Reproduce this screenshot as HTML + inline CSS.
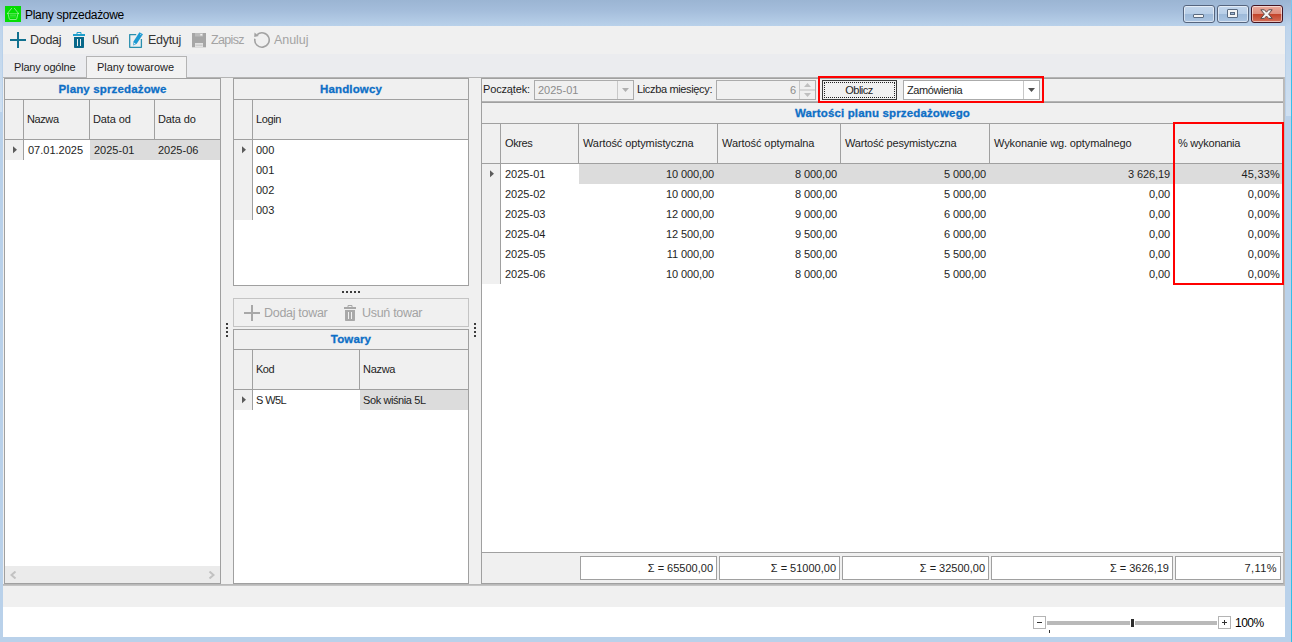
<!DOCTYPE html>
<html><head><meta charset="utf-8"><title>Plany sprzedażowe</title>
<style>
*{box-sizing:border-box;margin:0;padding:0}
html,body{width:1292px;height:642px;overflow:hidden;background:#b9d1ea}
body{position:relative;font-family:"Liberation Sans","DejaVu Sans",sans-serif;font-size:11px;color:#1e1e1e}
.a{position:absolute}
.t{position:absolute;white-space:nowrap}
.tb{font-size:12.5px;letter-spacing:-.3px;color:#343434}
.dis{color:#a3a3a3}
.band{color:#0e6fc6;font-weight:bold;text-align:center;font-size:11.5px;letter-spacing:.15px;-webkit-text-stroke:.3px #0e6fc6}
.r{text-align:right}
.wb{border:1px solid #56657e;border-radius:3px;background:linear-gradient(#c3d6ec 0,#b9cfe8 48%,#9db9d9 52%,#abc5e2 100%);box-shadow:inset 0 0 0 1px rgba(255,255,255,.55)}
.wc{border-color:#431422;background:linear-gradient(#e9a99b 0,#de8f7f 48%,#c2432a 52%,#d4705a 100%)}
</style></head><body>
<div class="a" style="left:0px;top:0px;width:1292px;height:26px;background:linear-gradient(#9bb5d3 0,#a4bddb 40%,#b9d1ea 100%)"></div>
<div class="a" style="left:1291px;top:0px;width:1px;height:642px;background:linear-gradient(#7cc6f0 0,#35c0ec 12%,#30c0e8 100%)"></div>
<div class="a" style="left:1286px;top:0px;width:5px;height:116px;background:linear-gradient(rgba(255,255,255,0),rgba(255,255,255,.32))"></div>
<div class="a" style="left:0px;top:0px;width:2px;height:112px;background:linear-gradient(rgba(255,255,255,0),rgba(255,255,255,.32))"></div>
<div class="a" style="left:3px;top:26px;width:1282px;height:611px;background:#fff"></div>
<div class="a" style="left:3px;top:26px;width:1282px;height:28px;background:#f0f0f0"></div>
<div class="a" style="left:3px;top:54px;width:1282px;height:23px;background:#ebecef"></div>
<div class="a" style="left:3px;top:77px;width:1282px;height:509px;background:#f0f0f0"></div>
<div class="a" style="left:3px;top:77px;width:1282px;height:1px;background:#b4b4b4"></div>
<div class="a" style="left:3px;top:584px;width:1282px;height:1px;background:#b9b9b9"></div>
<div class="a" style="left:3px;top:585px;width:1282px;height:1px;background:#c4c4c4"></div>
<div class="a" style="left:1284px;top:77px;width:1px;height:509px;background:#bcbcbc"></div>
<div class="a" style="left:3px;top:586px;width:1282px;height:21px;background:#f0f0f0"></div>
<div class="a" style="left:5px;top:6px;width:16px;height:16px;background:#04dc04"></div>
<svg class="a" style="left:5px;top:6px" width="16" height="16" viewBox="0 0 16 16"><g fill="none" stroke="#fff" stroke-width="1" stroke-linecap="round"><path d="M6.600 2.300L2.600 7.300M9.400 2.300L13.400 7.300" opacity=".5"/><path d="M2.400 7.500H13.600" opacity=".3"/><path d="M3 7.600L4.300 13Q4.500 13.500 5 13.500H11Q11.500 13.500 11.700 13L13 7.600" opacity=".5"/><path d="M6 9.500v2M8 9.500v2M10 9.500v2M5.200 9H10.800" stroke-width=".8" opacity=".3"/></g></svg>
<div class="t" style="left:25px;top:6px;height:18px;line-height:18px;font-size:12px;letter-spacing:-.3px;color:#000;">Plany sprzedażowe</div>
<div class="a wb" style="left:1183px;top:5px;width:32px;height:18px;"><div class="a" style="left:9px;top:8px;width:11px;height:4px;background:#f4f4f4;border:1px solid #5a6a80;border-radius:1px"></div></div>
<div class="a wb" style="left:1217px;top:5px;width:32px;height:18px;"><div class="a" style="left:9px;top:3px;width:11px;height:9px;background:#f4f4f4;border:1px solid #5a6a80;border-radius:1px"></div><div class="a" style="left:12px;top:6px;width:5px;height:3px;background:#9fb7d6;border:1px solid #5a6a80"></div></div>
<div class="a wb wc" style="left:1251px;top:5px;width:32px;height:18px;"><svg class="a" style="left:8px;top:3px" width="13" height="11" viewBox="0 0 13 11"><path d="M0.800 0.800h3.600L6.500 3.200 8.600 0.800h3.600L8.600 5.100l3.600 4.300h-3.600L6.500 7 4.400 9.400H0.800L4.400 5.100z" fill="#f4f4f4" stroke="#5b4a4a" stroke-width="1"/></svg></div>
<svg class="a" style="left:10px;top:32px" width="16" height="16" viewBox="0 0 16 16"><path d="M7 0h2v7h7v2H9v7H7V9H0V7h7z" fill="#11718f"/></svg>
<div class="t tb" style="left:30px;top:30px;height:20px;line-height:20px;">Dodaj</div>
<svg class="a" style="left:73px;top:32px" width="12" height="16" viewBox="0 0 12 16"><path d="M4 2.500V0.500H8V2.500" fill="none" stroke="#1f9fcc" stroke-width="1"/><path d="M0 2h12v2H0z" fill="#1f9fcc"/><path d="M1 5h10v10.200q0 .8-.8.800H1.800q-.8 0-.8-.8z" fill="#08688a"/><path d="M4 7h1v7H4zM7 7h1v7H7z" fill="#f0f0f0"/></svg>
<div class="t tb" style="left:92px;top:30px;height:20px;line-height:20px;letter-spacing:-0.75px;">Usuń</div>
<svg class="a" style="left:128px;top:32px" width="16" height="16" viewBox="0 0 16 16"><path d="M8.200 2.600H1.700V15.300H13.400V7" fill="none" stroke="#2a8fae" stroke-width="1.300" stroke-linejoin="round"/><path d="M11.400 0.200L15 2.300 8.700 11.800 5.300 13.400 5.500 9.600z" fill="#1e9ad2"/><path d="M6.200 10.800l1.500.9-1.800.9z" fill="#e8f4fa"/><path d="M12.300 2.300l.9.500" stroke="#e8f4fa" stroke-width=".8"/></svg>
<div class="t tb" style="left:148px;top:30px;height:20px;line-height:20px;">Edytuj</div>
<svg class="a" style="left:192px;top:32px" width="14" height="16" viewBox="0 0 14 16"><path d="M0 1h14v14.300H0z" fill="#a6a6a6"/><path d="M3 1h8v3.500H3z" fill="#bcbcbc"/><path d="M8.300 2h2v1.500h-2z" fill="#f2f2f2"/><path d="M3 11h8v4.300H3z" fill="#e2e2e2"/><path d="M3.500 13.200h7" stroke="#bdbdbd" stroke-width=".8"/></svg>
<div class="t tb dis" style="left:211px;top:30px;height:20px;line-height:20px;letter-spacing:-0.65px;">Zapisz</div>
<svg class="a" style="left:253px;top:31px" width="18" height="18" viewBox="0 0 18 18"><path d="M4.180 3.650A7.200 7.200 0 1 1 1.910 7.750" fill="none" stroke="#a2a2a2" stroke-width="1.600"/><path d="M1.500 1.600L5.800 5.100 1.200 5.900z" fill="#a2a2a2"/></svg>
<div class="t tb dis" style="left:274px;top:30px;height:20px;line-height:20px;letter-spacing:-0.05px;">Anuluj</div>
<div class="t" style="left:14px;top:57px;height:20px;line-height:20px;letter-spacing:-0.18px;">Plany ogólne</div>
<div class="a" style="left:86px;top:56px;width:101px;height:22px;background:#f2f2f2;border:1px solid #b4b4b4;border-bottom:none"></div>
<div class="t" style="left:97px;top:57px;height:20px;line-height:20px;letter-spacing:-0.05px;">Plany towarowe</div>
<div class="a" style="left:4px;top:78px;width:217px;height:506px;background:#fff;border:1px solid #a0a0a0"></div>
<div class="a" style="left:5px;top:79px;width:215px;height:60px;background:#f0f0f0"></div>
<div class="t band" style="left:5px;top:79px;width:215px;height:20px;line-height:20px;">Plany sprzedażowe</div>
<div class="a" style="left:5px;top:99px;width:215px;height:1px;background:#a0a0a0"></div>
<div class="a" style="left:5px;top:139px;width:215px;height:1px;background:#a0a0a0"></div>
<div class="a" style="left:23px;top:100px;width:1px;height:60px;background:#a0a0a0"></div>
<div class="a" style="left:89px;top:100px;width:1px;height:39px;background:#a0a0a0"></div>
<div class="a" style="left:154px;top:100px;width:1px;height:39px;background:#a0a0a0"></div>
<div class="a" style="left:5px;top:140px;width:18px;height:20px;background:#f0f0f0"></div>
<svg class="a" style="left:13px;top:146px" width="5" height="8" viewBox="0 0 5 8"><path d="M0 0.300L4 3.800 0 7.300z" fill="#5c5c5c"/></svg>
<div class="t" style="left:27px;top:109px;height:20px;line-height:20px;letter-spacing:-0.4px;">Nazwa</div>
<div class="t" style="left:93px;top:109px;height:20px;line-height:20px;letter-spacing:-0.1px;">Data od</div>
<div class="t" style="left:158px;top:109px;height:20px;line-height:20px;letter-spacing:-0.1px;">Data do</div>
<div class="a" style="left:90px;top:140px;width:130px;height:20px;background:#dcdcdc"></div>
<div class="t" style="left:28px;top:140px;height:20px;line-height:20px;letter-spacing:0px;">07.01.2025</div>
<div class="t" style="left:94px;top:140px;height:20px;line-height:20px;">2025-01</div>
<div class="t" style="left:158px;top:140px;height:20px;line-height:20px;">2025-06</div>
<div class="a" style="left:5px;top:566px;width:215px;height:17px;background:#ebebeb"></div>
<svg class="a" style="left:10px;top:571px" width="7" height="8" viewBox="0 0 7 8"><path d="M5.500 0.500L1.500 4l4 3.500" fill="none" stroke="#c2c2c2" stroke-width="2"/></svg>
<svg class="a" style="left:208px;top:571px" width="7" height="8" viewBox="0 0 7 8"><path d="M1.500 0.500L5.500 4l-4 3.500" fill="none" stroke="#c2c2c2" stroke-width="2"/></svg>
<div class="a" style="left:233px;top:78px;width:236px;height:208px;background:#fff;border:1px solid #a0a0a0"></div>
<div class="a" style="left:234px;top:79px;width:234px;height:60px;background:#f0f0f0"></div>
<div class="t band" style="left:234px;top:79px;width:234px;height:20px;line-height:20px;">Handlowcy</div>
<div class="a" style="left:234px;top:99px;width:234px;height:1px;background:#a0a0a0"></div>
<div class="a" style="left:234px;top:139px;width:234px;height:1px;background:#a0a0a0"></div>
<div class="a" style="left:252px;top:100px;width:1px;height:120px;background:#a0a0a0"></div>
<div class="a" style="left:234px;top:140px;width:18px;height:80px;background:#f0f0f0"></div>
<svg class="a" style="left:242px;top:146px" width="5" height="8" viewBox="0 0 5 8"><path d="M0 0.300L4 3.800 0 7.300z" fill="#5c5c5c"/></svg>
<div class="t" style="left:256px;top:109px;height:20px;line-height:20px;letter-spacing:-0.4px;">Login</div>
<div class="t" style="left:256px;top:140px;height:20px;line-height:20px;">000</div>
<div class="t" style="left:256px;top:160px;height:20px;line-height:20px;">001</div>
<div class="t" style="left:256px;top:180px;height:20px;line-height:20px;">002</div>
<div class="t" style="left:256px;top:200px;height:20px;line-height:20px;">003</div>
<div class="a" style="left:342px;top:291px;width:2px;height:2px;background:#3c3c3c"></div>
<div class="a" style="left:346px;top:291px;width:2px;height:2px;background:#3c3c3c"></div>
<div class="a" style="left:350px;top:291px;width:2px;height:2px;background:#3c3c3c"></div>
<div class="a" style="left:354px;top:291px;width:2px;height:2px;background:#3c3c3c"></div>
<div class="a" style="left:358px;top:291px;width:2px;height:2px;background:#3c3c3c"></div>
<div class="a" style="left:226px;top:323px;width:2px;height:2px;background:#3c3c3c"></div>
<div class="a" style="left:226px;top:327px;width:2px;height:2px;background:#3c3c3c"></div>
<div class="a" style="left:226px;top:331px;width:2px;height:2px;background:#3c3c3c"></div>
<div class="a" style="left:226px;top:335px;width:2px;height:2px;background:#3c3c3c"></div>
<div class="a" style="left:474px;top:323px;width:2px;height:2px;background:#3c3c3c"></div>
<div class="a" style="left:474px;top:327px;width:2px;height:2px;background:#3c3c3c"></div>
<div class="a" style="left:474px;top:331px;width:2px;height:2px;background:#3c3c3c"></div>
<div class="a" style="left:474px;top:335px;width:2px;height:2px;background:#3c3c3c"></div>
<div class="a" style="left:233px;top:298px;width:236px;height:29px;border:1px solid #c4c4c4;background:#f0f0f0"></div>
<svg class="a" style="left:244px;top:305px" width="16" height="16" viewBox="0 0 16 16"><path d="M7 0h2v7h7v2H9v7H7V9H0V7h7z" fill="#a8a8a8"/></svg>
<div class="t tb dis" style="left:264px;top:303px;height:20px;line-height:20px;">Dodaj towar</div>
<svg class="a" style="left:344px;top:305px" width="12" height="16" viewBox="0 0 12 16"><path d="M4 2.500V0.500H8V2.500" fill="none" stroke="#a8a8a8" stroke-width="1"/><path d="M0 2h12v2H0z" fill="#a8a8a8"/><path d="M1 5h10v10.200q0 .8-.8.800H1.800q-.8 0-.8-.8z" fill="#a8a8a8"/><path d="M4 7h1v7H4zM7 7h1v7H7z" fill="#f0f0f0"/></svg>
<div class="t tb dis" style="left:362px;top:303px;height:20px;line-height:20px;">Usuń towar</div>
<div class="a" style="left:233px;top:329px;width:236px;height:255px;background:#fff;border:1px solid #a0a0a0"></div>
<div class="a" style="left:234px;top:330px;width:234px;height:59px;background:#f0f0f0"></div>
<div class="t band" style="left:234px;top:329px;width:234px;height:20px;line-height:20px;">Towary</div>
<div class="a" style="left:234px;top:349px;width:234px;height:1px;background:#a0a0a0"></div>
<div class="a" style="left:234px;top:389px;width:234px;height:1px;background:#a0a0a0"></div>
<div class="a" style="left:252px;top:350px;width:1px;height:60px;background:#a0a0a0"></div>
<div class="a" style="left:359px;top:350px;width:1px;height:39px;background:#a0a0a0"></div>
<div class="a" style="left:234px;top:390px;width:18px;height:20px;background:#f0f0f0"></div>
<svg class="a" style="left:242px;top:396px" width="5" height="8" viewBox="0 0 5 8"><path d="M0 0.300L4 3.800 0 7.300z" fill="#5c5c5c"/></svg>
<div class="t" style="left:256px;top:359px;height:20px;line-height:20px;letter-spacing:-0.5px;">Kod</div>
<div class="t" style="left:363px;top:359px;height:20px;line-height:20px;letter-spacing:-0.3px;">Nazwa</div>
<div class="a" style="left:360px;top:390px;width:108px;height:20px;background:#dcdcdc"></div>
<div class="t" style="left:256px;top:390px;height:20px;line-height:20px;letter-spacing:-0.6px;">S W5L</div>
<div class="t" style="left:363px;top:390px;height:20px;line-height:20px;letter-spacing:-0.4px;">Sok wiśnia 5L</div>
<div class="a" style="left:481px;top:78px;width:803px;height:506px;background:#fff;border:1px solid #a0a0a0;border-right-color:#b8b8b8"></div>
<div class="a" style="left:482px;top:79px;width:801px;height:84px;background:#f0f0f0"></div>
<div class="a" style="left:482px;top:101px;width:801px;height:1px;background:#b4b4b4"></div>
<div class="a" style="left:482px;top:102px;width:801px;height:1px;background:#a0a0a0"></div>
<div class="t" style="left:483px;top:79px;height:20px;line-height:20px;letter-spacing:-0.15px;">Początek:</div>
<div class="a" style="left:534px;top:80px;width:100px;height:20px;border:1px solid #ababab;background:#f0f0f0"></div>
<div class="a" style="left:617px;top:81px;width:1px;height:18px;background:#c8c8c8"></div>
<div class="t" style="left:538px;top:80px;height:20px;line-height:20px;color:#8c8c8c;">2025-01</div>
<svg class="a" style="left:622px;top:88px" width="7" height="4" viewBox="0 0 7 4"><path d="M0 0h7L3.500 4z" fill="#b0b0b0"/></svg>
<div class="t" style="left:637px;top:79px;height:20px;line-height:20px;letter-spacing:-0.35px;">Liczba miesięcy:</div>
<div class="a" style="left:716px;top:80px;width:100px;height:20px;border:1px solid #ababab;background:#f0f0f0"></div>
<div class="a" style="left:799px;top:81px;width:1px;height:18px;background:#c8c8c8"></div>
<div class="a" style="left:800px;top:89px;width:15px;height:2px;background:#d6d6d6"></div>
<div class="t" style="left:716px;top:80px;width:80px;height:20px;line-height:20px;color:#8c8c8c;text-align:right;">6</div>
<svg class="a" style="left:804px;top:83px" width="7" height="4" viewBox="0 0 7 4"><path d="M0 4h7L3.500 0z" fill="#c0c0c0"/></svg>
<svg class="a" style="left:804px;top:93px" width="7" height="4" viewBox="0 0 7 4"><path d="M0 0h7L3.500 4z" fill="#c0c0c0"/></svg>
<div class="a" style="left:822px;top:80px;width:75px;height:20px;border:1px solid #3a3a3a;background:#f0f0f0"><div class="a" style="left:1px;top:1px;right:1px;bottom:1px;border:1px dotted #222"></div></div>
<div class="t" style="left:822px;top:80px;width:74px;height:20px;line-height:20px;text-align:center;letter-spacing:-0.5px;">Oblicz</div>
<div class="a" style="left:903px;top:80px;width:137px;height:20px;border:1px solid #ababab;background:#fff"></div>
<div class="a" style="left:1023px;top:81px;width:1px;height:18px;background:#c8c8c8"></div>
<div class="t" style="left:907px;top:80px;height:20px;line-height:20px;letter-spacing:-0.4px;">Zamówienia</div>
<svg class="a" style="left:1028px;top:88px" width="7" height="4" viewBox="0 0 7 4"><path d="M0 0h7L3.500 4z" fill="#505050"/></svg>
<div class="a" style="left:818px;top:76px;width:226px;height:27px;border:2px solid #f00"></div>
<div class="t band" style="left:482px;top:103px;width:801px;height:20px;line-height:20px;">Wartości planu sprzedażowego</div>
<div class="a" style="left:482px;top:123px;width:801px;height:1px;background:#a0a0a0"></div>
<div class="a" style="left:482px;top:163px;width:801px;height:1px;background:#a0a0a0"></div>
<div class="a" style="left:500px;top:124px;width:1px;height:160px;background:#a0a0a0"></div>
<div class="a" style="left:578px;top:124px;width:1px;height:39px;background:#a0a0a0"></div>
<div class="a" style="left:717px;top:124px;width:1px;height:39px;background:#a0a0a0"></div>
<div class="a" style="left:840px;top:124px;width:1px;height:39px;background:#a0a0a0"></div>
<div class="a" style="left:989px;top:124px;width:1px;height:39px;background:#a0a0a0"></div>
<div class="a" style="left:1173px;top:124px;width:1px;height:39px;background:#a0a0a0"></div>
<div class="a" style="left:482px;top:164px;width:18px;height:120px;background:#f0f0f0"></div>
<svg class="a" style="left:490px;top:170px" width="5" height="8" viewBox="0 0 5 8"><path d="M0 0.300L4 3.800 0 7.300z" fill="#5c5c5c"/></svg>
<div class="t" style="left:505px;top:133px;height:20px;line-height:20px;letter-spacing:-0.4px;">Okres</div>
<div class="t" style="left:583px;top:133px;height:20px;line-height:20px;letter-spacing:-0.1px;">Wartość optymistyczna</div>
<div class="t" style="left:722px;top:133px;height:20px;line-height:20px;letter-spacing:-0.08px;">Wartość optymalna</div>
<div class="t" style="left:845px;top:133px;height:20px;line-height:20px;letter-spacing:-0.18px;">Wartość pesymistyczna</div>
<div class="t" style="left:994px;top:133px;height:20px;line-height:20px;letter-spacing:-0.12px;">Wykonanie wg. optymalnego</div>
<div class="t" style="left:1178px;top:133px;height:20px;line-height:20px;letter-spacing:-0.25px;">% wykonania</div>
<div class="a" style="left:579px;top:164px;width:704px;height:20px;background:#dcdcdc"></div>
<div class="t" style="left:505px;top:164px;height:20px;line-height:20px;">2025-01</div>
<div class="t" style="left:594px;top:164px;width:120px;height:20px;line-height:20px;text-align:right;letter-spacing:-0.1px;">10 000,00</div>
<div class="t" style="left:717px;top:164px;width:120px;height:20px;line-height:20px;text-align:right;letter-spacing:-0.1px;">8 000,00</div>
<div class="t" style="left:866px;top:164px;width:120px;height:20px;line-height:20px;text-align:right;letter-spacing:-0.1px;">5 000,00</div>
<div class="t" style="left:1050px;top:164px;width:120px;height:20px;line-height:20px;text-align:right;letter-spacing:-0.1px;">3 626,19</div>
<div class="t" style="left:1160px;top:164px;width:120px;height:20px;line-height:20px;text-align:right;letter-spacing:0.2px;">45,33%</div>
<div class="t" style="left:505px;top:184px;height:20px;line-height:20px;">2025-02</div>
<div class="t" style="left:594px;top:184px;width:120px;height:20px;line-height:20px;text-align:right;letter-spacing:-0.1px;">10 000,00</div>
<div class="t" style="left:717px;top:184px;width:120px;height:20px;line-height:20px;text-align:right;letter-spacing:-0.1px;">8 000,00</div>
<div class="t" style="left:866px;top:184px;width:120px;height:20px;line-height:20px;text-align:right;letter-spacing:-0.1px;">5 000,00</div>
<div class="t" style="left:1050px;top:184px;width:120px;height:20px;line-height:20px;text-align:right;letter-spacing:-0.1px;">0,00</div>
<div class="t" style="left:1160px;top:184px;width:120px;height:20px;line-height:20px;text-align:right;letter-spacing:0.2px;">0,00%</div>
<div class="t" style="left:505px;top:204px;height:20px;line-height:20px;">2025-03</div>
<div class="t" style="left:594px;top:204px;width:120px;height:20px;line-height:20px;text-align:right;letter-spacing:-0.1px;">12 000,00</div>
<div class="t" style="left:717px;top:204px;width:120px;height:20px;line-height:20px;text-align:right;letter-spacing:-0.1px;">9 000,00</div>
<div class="t" style="left:866px;top:204px;width:120px;height:20px;line-height:20px;text-align:right;letter-spacing:-0.1px;">6 000,00</div>
<div class="t" style="left:1050px;top:204px;width:120px;height:20px;line-height:20px;text-align:right;letter-spacing:-0.1px;">0,00</div>
<div class="t" style="left:1160px;top:204px;width:120px;height:20px;line-height:20px;text-align:right;letter-spacing:0.2px;">0,00%</div>
<div class="t" style="left:505px;top:224px;height:20px;line-height:20px;">2025-04</div>
<div class="t" style="left:594px;top:224px;width:120px;height:20px;line-height:20px;text-align:right;letter-spacing:-0.1px;">12 500,00</div>
<div class="t" style="left:717px;top:224px;width:120px;height:20px;line-height:20px;text-align:right;letter-spacing:-0.1px;">9 500,00</div>
<div class="t" style="left:866px;top:224px;width:120px;height:20px;line-height:20px;text-align:right;letter-spacing:-0.1px;">6 000,00</div>
<div class="t" style="left:1050px;top:224px;width:120px;height:20px;line-height:20px;text-align:right;letter-spacing:-0.1px;">0,00</div>
<div class="t" style="left:1160px;top:224px;width:120px;height:20px;line-height:20px;text-align:right;letter-spacing:0.2px;">0,00%</div>
<div class="t" style="left:505px;top:244px;height:20px;line-height:20px;">2025-05</div>
<div class="t" style="left:594px;top:244px;width:120px;height:20px;line-height:20px;text-align:right;letter-spacing:-0.1px;">11 000,00</div>
<div class="t" style="left:717px;top:244px;width:120px;height:20px;line-height:20px;text-align:right;letter-spacing:-0.1px;">8 500,00</div>
<div class="t" style="left:866px;top:244px;width:120px;height:20px;line-height:20px;text-align:right;letter-spacing:-0.1px;">5 500,00</div>
<div class="t" style="left:1050px;top:244px;width:120px;height:20px;line-height:20px;text-align:right;letter-spacing:-0.1px;">0,00</div>
<div class="t" style="left:1160px;top:244px;width:120px;height:20px;line-height:20px;text-align:right;letter-spacing:0.2px;">0,00%</div>
<div class="t" style="left:505px;top:264px;height:20px;line-height:20px;">2025-06</div>
<div class="t" style="left:594px;top:264px;width:120px;height:20px;line-height:20px;text-align:right;letter-spacing:-0.1px;">10 000,00</div>
<div class="t" style="left:717px;top:264px;width:120px;height:20px;line-height:20px;text-align:right;letter-spacing:-0.1px;">8 000,00</div>
<div class="t" style="left:866px;top:264px;width:120px;height:20px;line-height:20px;text-align:right;letter-spacing:-0.1px;">5 000,00</div>
<div class="t" style="left:1050px;top:264px;width:120px;height:20px;line-height:20px;text-align:right;letter-spacing:-0.1px;">0,00</div>
<div class="t" style="left:1160px;top:264px;width:120px;height:20px;line-height:20px;text-align:right;letter-spacing:0.2px;">0,00%</div>
<div class="a" style="left:1173px;top:122px;width:111px;height:163px;border:2px solid #f00"></div>
<div class="a" style="left:482px;top:552px;width:801px;height:1px;background:#a0a0a0"></div>
<div class="a" style="left:482px;top:553px;width:801px;height:30px;background:#f0f0f0"></div>
<div class="a" style="left:580px;top:556px;width:137px;height:24px;background:#fff;border:1px solid #a0a0a0"></div>
<div class="t" style="left:580px;top:558px;width:133px;height:20px;line-height:20px;text-align:right;">Σ = 65500,00</div>
<div class="a" style="left:719px;top:556px;width:121px;height:24px;background:#fff;border:1px solid #a0a0a0"></div>
<div class="t" style="left:719px;top:558px;width:117px;height:20px;line-height:20px;text-align:right;">Σ = 51000,00</div>
<div class="a" style="left:842px;top:556px;width:147px;height:24px;background:#fff;border:1px solid #a0a0a0"></div>
<div class="t" style="left:842px;top:558px;width:143px;height:20px;line-height:20px;text-align:right;">Σ = 32500,00</div>
<div class="a" style="left:991px;top:556px;width:182px;height:24px;background:#fff;border:1px solid #a0a0a0"></div>
<div class="t" style="left:991px;top:558px;width:178px;height:20px;line-height:20px;text-align:right;">Σ = 3626,19</div>
<div class="a" style="left:1175px;top:556px;width:106px;height:24px;background:#fff;border:1px solid #a0a0a0"></div>
<div class="t" style="left:1175px;top:558px;width:102px;height:20px;line-height:20px;text-align:right;letter-spacing:0.45px;">7,11%</div>
<div class="a" style="left:1033px;top:616px;width:13px;height:13px;background:#fff;border:1px solid #b4b4b4"></div>
<div class="a" style="left:1037px;top:622px;width:5px;height:1px;background:#333"></div>
<div class="a" style="left:1047px;top:621px;width:170px;height:4px;background:#b9b9b9"></div>
<div class="a" style="left:1130px;top:619px;width:5px;height:8px;background:#fff"></div>
<div class="a" style="left:1131px;top:619px;width:3px;height:8px;background:#2e2e2e"></div>
<div class="a" style="left:1218px;top:616px;width:13px;height:13px;background:#fff;border:1px solid #b4b4b4"></div>
<div class="a" style="left:1222px;top:622px;width:5px;height:1px;background:#333"></div>
<div class="a" style="left:1224px;top:620px;width:1px;height:5px;background:#333"></div>
<div class="t" style="left:1235px;top:613px;height:20px;line-height:20px;font-size:12px;letter-spacing:-.5px;color:#000;">100%</div>
<div class="a" style="left:1049px;top:630px;width:1px;height:3px;background:#333"></div>
</body></html>
